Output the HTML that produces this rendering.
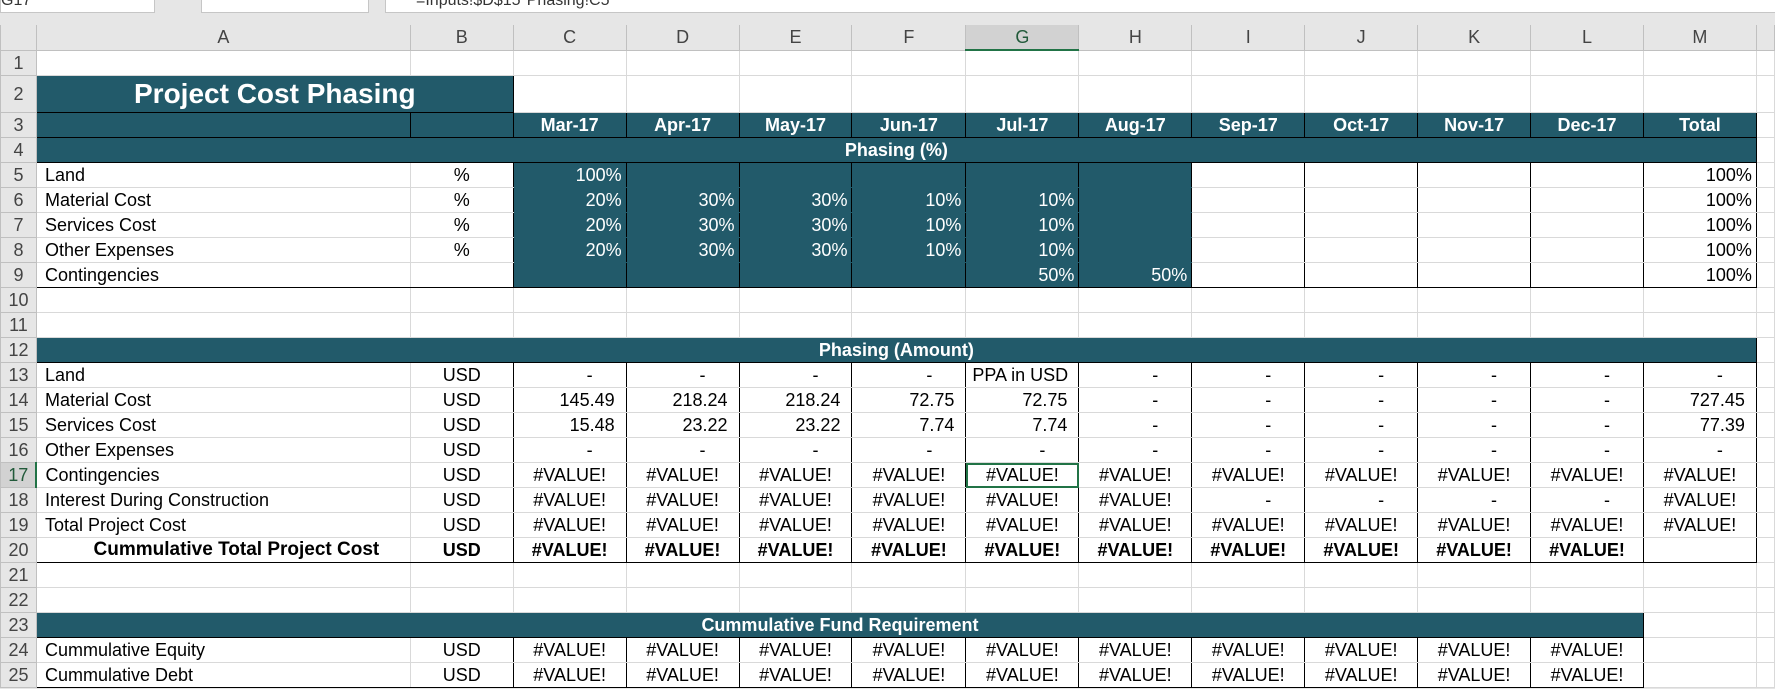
<!DOCTYPE html>
<html><head><meta charset="utf-8"><style>
html,body{margin:0;padding:0;width:1775px;height:689px;overflow:hidden;background:#e6e6e6;font-family:"Liberation Sans",Arial,sans-serif}
.box{position:absolute;top:-2px;height:13px;background:#fff;border:1px solid #c6c6c6;overflow:hidden;font-size:16px;line-height:4px;color:#333}
table{position:absolute;left:0;top:25px;border-collapse:collapse;table-layout:fixed;background:#fff}
td{border:1px solid #d9d9d9;height:24px;padding:0 4px;white-space:nowrap;overflow:hidden;font-size:18px;line-height:20px;color:#000;text-align:right}
td.h{background:#e6e6e6;color:#444;text-align:center;border-color:#c0c0c0;padding:0}
tr.ch td{text-align:center;background:#e6e6e6;color:#444;border-color:#c0c0c0;border-top:none}
td.t{background:#225a6a;color:#fff}
.bd{font-weight:bold}
td.l{text-align:left;padding-left:8px}
td.c{text-align:center}
td.d{text-align:right;padding-right:33px}
td.n{padding-right:11px}
td.k{border-left:1px solid #000;border-right:1px solid #000}
td.t.k{border-top-color:#225a6a;border-bottom-color:#225a6a}
tr.bt td:not(.h){border-top:1px solid #000}
tr.bb td:not(.h){border-bottom:1px solid #000}
tr.bb td.t.k{border-bottom:1px solid #000}
</style></head><body>
<div class="box" style="left:0;width:153px">G17</div>
<div class="box" style="left:201px;width:166px"></div>
<div class="box" style="left:385px;width:1392px;padding-left:30px">=Inputs!$D$15*Phasing!C5</div>
<table>
<colgroup><col style="width:36px"><col style="width:374px"><col style="width:103px"><col style="width:113px"><col style="width:113px"><col style="width:113px"><col style="width:114px"><col style="width:113px"><col style="width:113px"><col style="width:113px"><col style="width:113px"><col style="width:113px"><col style="width:113px"><col style="width:113px"><col style="width:18px"></colgroup>
<tr class="ch"><td style="background:#e6e6e6"></td><td>A</td><td>B</td><td>C</td><td>D</td><td>E</td><td>F</td><td style="background:#d2d2d2;border-bottom:2px solid #217346;color:#225a3a">G</td><td>H</td><td>I</td><td>J</td><td>K</td><td>L</td><td>M</td><td></td></tr>
<tr><td class="h">1</td><td></td><td></td><td></td><td></td><td></td><td></td><td></td><td></td><td></td><td></td><td></td><td></td><td></td><td></td></tr>
<tr><td class="h" style="height:36px">2</td><td colspan="2" class="t bd c" style="font-size:28px;border-color:#000">Project Cost Phasing</td><td></td><td></td><td></td><td></td><td></td><td></td><td></td><td></td><td></td><td></td><td></td><td></td></tr>
<tr><td class="h">3</td><td class="t" style="border-color:#000"></td><td class="t" style="border-color:#000"></td><td class="t bd c" style="border-color:#000">Mar-17</td><td class="t bd c" style="border-color:#000">Apr-17</td><td class="t bd c" style="border-color:#000">May-17</td><td class="t bd c" style="border-color:#000">Jun-17</td><td class="t bd c" style="border-color:#000">Jul-17</td><td class="t bd c" style="border-color:#000">Aug-17</td><td class="t bd c" style="border-color:#000">Sep-17</td><td class="t bd c" style="border-color:#000">Oct-17</td><td class="t bd c" style="border-color:#000">Nov-17</td><td class="t bd c" style="border-color:#000">Dec-17</td><td class="t bd c" style="border-color:#000">Total</td><td></td></tr>
<tr><td class="h">4</td><td colspan="13" class="t bd c" style="border-color:#000;border-top-color:#7f9fa8">Phasing (%)</td><td></td></tr>
<tr><td class="h">5</td><td class="l">Land</td><td class="c k">%</td><td class="t k" style="border-top-color:#000">100%</td><td class="t k" style="border-top-color:#000"></td><td class="t k" style="border-top-color:#000"></td><td class="t k" style="border-top-color:#000"></td><td class="t k" style="border-top-color:#000"></td><td class="t k" style="border-top-color:#000"></td><td class="k"></td><td class="k"></td><td class="k"></td><td class="k"></td><td class="k">100%</td><td></td></tr>
<tr><td class="h">6</td><td class="l">Material Cost</td><td class="c k">%</td><td class="t k">20%</td><td class="t k">30%</td><td class="t k">30%</td><td class="t k">10%</td><td class="t k">10%</td><td class="t k"></td><td class="k"></td><td class="k"></td><td class="k"></td><td class="k"></td><td class="k">100%</td><td></td></tr>
<tr><td class="h">7</td><td class="l">Services Cost</td><td class="c k">%</td><td class="t k">20%</td><td class="t k">30%</td><td class="t k">30%</td><td class="t k">10%</td><td class="t k">10%</td><td class="t k"></td><td class="k"></td><td class="k"></td><td class="k"></td><td class="k"></td><td class="k">100%</td><td></td></tr>
<tr><td class="h">8</td><td class="l">Other Expenses</td><td class="c k">%</td><td class="t k">20%</td><td class="t k">30%</td><td class="t k">30%</td><td class="t k">10%</td><td class="t k">10%</td><td class="t k"></td><td class="k"></td><td class="k"></td><td class="k"></td><td class="k"></td><td class="k">100%</td><td></td></tr>
<tr class="bb"><td class="h">9</td><td class="l">Contingencies</td><td class="c k"></td><td class="t k"></td><td class="t k"></td><td class="t k"></td><td class="t k"></td><td class="t k">50%</td><td class="t k">50%</td><td class="k"></td><td class="k"></td><td class="k"></td><td class="k"></td><td class="k">100%</td><td style="border-bottom-color:#d9d9d9"></td></tr>
<tr><td class="h">10</td><td></td><td></td><td></td><td></td><td></td><td></td><td></td><td></td><td></td><td></td><td></td><td></td><td></td><td></td></tr>
<tr><td class="h">11</td><td></td><td></td><td></td><td></td><td></td><td></td><td></td><td></td><td></td><td></td><td></td><td></td><td></td><td></td></tr>
<tr><td class="h">12</td><td colspan="13" class="t bd c" style="border-color:#000">Phasing (Amount)</td><td></td></tr>
<tr><td class="h">13</td><td class="l">Land</td><td class="c k">USD</td><td class="d k">-</td><td class="d k">-</td><td class="d k">-</td><td class="d k">-</td><td class="k" style="text-align:left;padding-left:6px">PPA in USD</td><td class="d k">-</td><td class="d k">-</td><td class="d k">-</td><td class="d k">-</td><td class="d k">-</td><td class="d k">-</td><td></td></tr>
<tr><td class="h">14</td><td class="l">Material Cost</td><td class="c k">USD</td><td class="n k">145.49</td><td class="n k">218.24</td><td class="n k">218.24</td><td class="n k">72.75</td><td class="n k">72.75</td><td class="d k">-</td><td class="d k">-</td><td class="d k">-</td><td class="d k">-</td><td class="d k">-</td><td class="n k">727.45</td><td></td></tr>
<tr><td class="h">15</td><td class="l">Services Cost</td><td class="c k">USD</td><td class="n k">15.48</td><td class="n k">23.22</td><td class="n k">23.22</td><td class="n k">7.74</td><td class="n k">7.74</td><td class="d k">-</td><td class="d k">-</td><td class="d k">-</td><td class="d k">-</td><td class="d k">-</td><td class="n k">77.39</td><td></td></tr>
<tr><td class="h">16</td><td class="l">Other Expenses</td><td class="c k">USD</td><td class="d k">-</td><td class="d k">-</td><td class="d k">-</td><td class="d k">-</td><td class="d k">-</td><td class="d k">-</td><td class="d k">-</td><td class="d k">-</td><td class="d k">-</td><td class="d k">-</td><td class="d k">-</td><td></td></tr>
<tr><td class="h" style="background:#d2d2d2;border-right:2px solid #217346;color:#225a3a">17</td><td class="l">Contingencies</td><td class="c k">USD</td><td class="c k">#VALUE!</td><td class="c k">#VALUE!</td><td class="c k">#VALUE!</td><td class="c k">#VALUE!</td><td class="c" style="outline:2px solid #217346;outline-offset:-2px">#VALUE!</td><td class="c k">#VALUE!</td><td class="c k">#VALUE!</td><td class="c k">#VALUE!</td><td class="c k">#VALUE!</td><td class="c k">#VALUE!</td><td class="c k">#VALUE!</td><td></td></tr>
<tr><td class="h">18</td><td class="l">Interest During Construction</td><td class="c k">USD</td><td class="c k">#VALUE!</td><td class="c k">#VALUE!</td><td class="c k">#VALUE!</td><td class="c k">#VALUE!</td><td class="c k">#VALUE!</td><td class="c k">#VALUE!</td><td class="d k">-</td><td class="d k">-</td><td class="d k">-</td><td class="d k">-</td><td class="c k">#VALUE!</td><td></td></tr>
<tr><td class="h">19</td><td class="l">Total Project Cost</td><td class="c k">USD</td><td class="c k">#VALUE!</td><td class="c k">#VALUE!</td><td class="c k">#VALUE!</td><td class="c k">#VALUE!</td><td class="c k">#VALUE!</td><td class="c k">#VALUE!</td><td class="c k">#VALUE!</td><td class="c k">#VALUE!</td><td class="c k">#VALUE!</td><td class="c k">#VALUE!</td><td class="c k">#VALUE!</td><td></td></tr>
<tr class="bt bb bd"><td class="h" style="font-weight:normal">20</td><td class="c" style="padding-left:30px;font-size:19px">Cummulative Total Project Cost</td><td class="c k">USD</td><td class="c k">#VALUE!</td><td class="c k">#VALUE!</td><td class="c k">#VALUE!</td><td class="c k">#VALUE!</td><td class="c k">#VALUE!</td><td class="c k">#VALUE!</td><td class="c k">#VALUE!</td><td class="c k">#VALUE!</td><td class="c k">#VALUE!</td><td class="c k">#VALUE!</td><td class="k"></td><td style="border-color:#d9d9d9"></td></tr>
<tr><td class="h">21</td><td></td><td></td><td></td><td></td><td></td><td></td><td></td><td></td><td></td><td></td><td></td><td></td><td></td><td></td></tr>
<tr><td class="h">22</td><td></td><td></td><td></td><td></td><td></td><td></td><td></td><td></td><td></td><td></td><td></td><td></td><td></td><td></td></tr>
<tr><td class="h">23</td><td colspan="12" class="t bd c" style="border-color:#000">Cummulative Fund Requirement</td><td></td><td></td></tr>
<tr><td class="h">24</td><td class="l">Cummulative Equity</td><td class="c k">USD</td><td class="c k">#VALUE!</td><td class="c k">#VALUE!</td><td class="c k">#VALUE!</td><td class="c k">#VALUE!</td><td class="c k">#VALUE!</td><td class="c k">#VALUE!</td><td class="c k">#VALUE!</td><td class="c k">#VALUE!</td><td class="c k">#VALUE!</td><td class="c k">#VALUE!</td><td></td><td></td></tr>
<tr class="bb"><td class="h">25</td><td class="l">Cummulative Debt</td><td class="c k">USD</td><td class="c k">#VALUE!</td><td class="c k">#VALUE!</td><td class="c k">#VALUE!</td><td class="c k">#VALUE!</td><td class="c k">#VALUE!</td><td class="c k">#VALUE!</td><td class="c k">#VALUE!</td><td class="c k">#VALUE!</td><td class="c k">#VALUE!</td><td class="c k">#VALUE!</td><td style="border-bottom-color:#d9d9d9"></td><td style="border-bottom-color:#d9d9d9"></td></tr>
</table>
</body></html>
